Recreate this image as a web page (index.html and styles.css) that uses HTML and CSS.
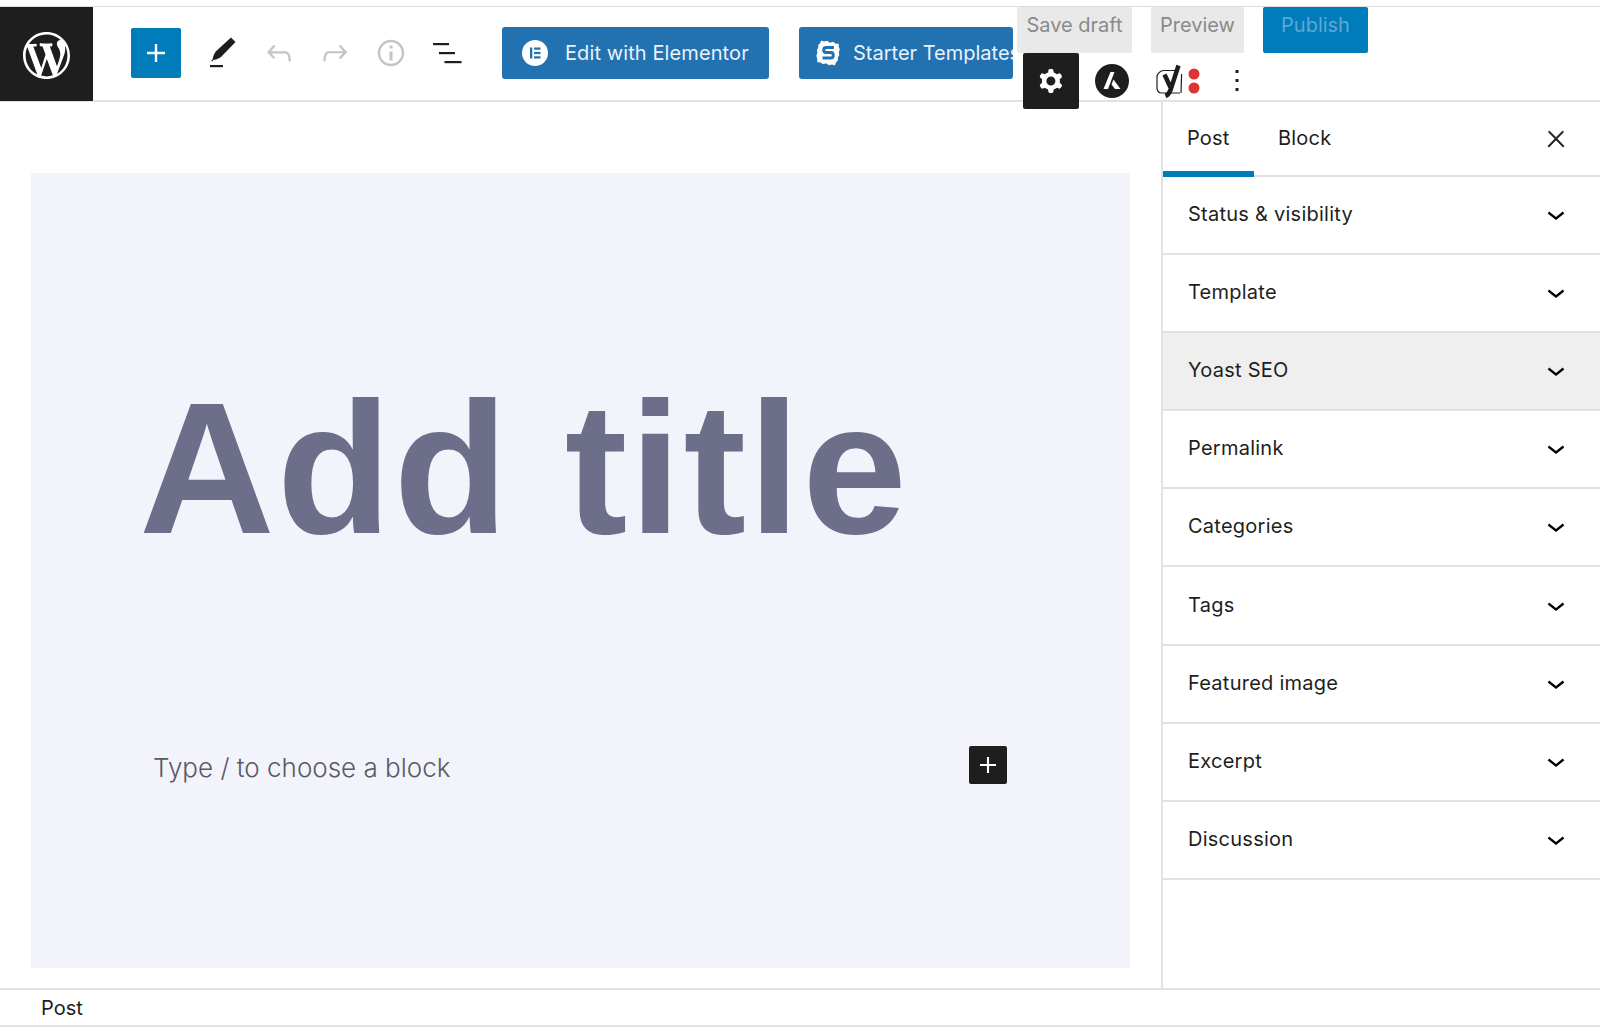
FILE: index.html
```html
<!DOCTYPE html>
<html lang="en">
<head>
<meta charset="utf-8">
<title>Add title</title>
<link rel="stylesheet" href="styles.css">
</head>
<body>
<div class="top-strip"></div>
<header class="header">
  <a class="logo"><svg viewBox="0 0 20 20" width="47" height="47"><path fill="#fff" d="M20 10c0-5.51-4.49-10-10-10C4.48 0 0 4.49 0 10c0 5.52 4.48 10 10 10 5.51 0 10-4.48 10-10zM7.78 15.37L4.37 6.22c.55-.02 1.17-.08 1.17-.08.5-.06.44-1.13-.06-1.11 0 0-1.45.11-2.37.11-.18 0-.37 0-.58-.01C4.12 2.69 6.87 1.11 10 1.11c2.33 0 4.45.87 6.05 2.34-.68-.11-1.65.39-1.65 1.58 0 .74.45 1.36.9 2.1.35.61.55 1.36.55 2.46 0 1.49-1.4 5-1.4 5l-3.03-8.37c.54-.02.82-.17.82-.17.5-.05.44-1.25-.06-1.22 0 0-1.44.12-2.38.12-.87 0-2.33-.12-2.33-.12-.5-.03-.56 1.2-.06 1.22l.92.08 1.26 3.41zM17.41 10c.24-.64.74-1.87.43-4.25.7 1.29 1.05 2.71 1.05 4.25 0 3.29-1.73 6.24-4.4 7.78.97-2.59 1.94-5.2 2.92-7.78zM6.1 18.09C3.12 16.65 1.11 13.53 1.11 10c0-1.3.23-2.48.72-3.59C3.25 10.3 4.67 14.2 6.1 18.09zm4.03-6.63l2.58 6.98c-.86.29-1.76.45-2.71.45-.79 0-1.57-.11-2.29-.33.81-2.38 1.62-4.74 2.42-7.1z"/></svg></a>
  <div class="tools">
    <button class="add"><svg viewBox="0 0 24 24" width="36" height="36"><path fill="#fff" d="M18 11.2h-5.2V6h-1.6v5.2H6v1.6h5.2V18h1.6v-5.2H18z"/></svg></button>
    <span class="tool"><svg viewBox="0 0 30 34" width="30" height="34"><path fill="#1e1e1e" d="M23 1.500l4.500 4.500-14 14.500c-2 1.800-5 3-8 3.500l-1.500 1.500-.8-.8 1.500-1.500c.4-3 1.500-6 3.300-8z"/><rect x="2" y="29" width="13" height="2.200" fill="#1e1e1e"/></svg></span>
    <span class="tool"><svg viewBox="0 0 24 24" width="36" height="36"><path fill="#c4c4c4" d="M18.300 11.700c-.6-.6-1.400-.9-2.300-.9H6.700l2.900-3.300-1.100-1-4.500 5L8.500 16l1-1-2.700-2.700H16c.5 0 .9.2 1.300.5 1 1 1 3.400 1 4.500v.3h1.500v-.2c0-1.500 0-4.300-1.500-5.700z"/></svg></span>
    <span class="tool"><svg viewBox="0 0 24 24" width="36" height="36"><path fill="#c4c4c4" d="M15.600 6.500l-1.100 1 2.900 3.300H8c-.9 0-1.700.3-2.300.9-1.400 1.500-1.400 4.200-1.400 5.600v.2h1.500v-.3c0-1.100 0-3.500 1-4.500.3-.3.7-.5 1.300-.5h9.200L14.500 15l1.100 1.100 4.600-4.600-4.600-5z"/></svg></span>
    <span class="tool"><svg viewBox="0 0 24 24" width="36" height="36"><path fill="#c4c4c4" d="M12 3.200c-4.800 0-8.800 3.900-8.800 8.800 0 4.800 3.900 8.800 8.800 8.800 4.800 0 8.800-3.900 8.800-8.800 0-4.800-4-8.800-8.800-8.800zm0 16c-4 0-7.200-3.300-7.200-7.200C4.800 8 8 4.800 12 4.800s7.200 3.300 7.200 7.200c0 4-3.200 7.200-7.200 7.200zM11 17h2v-6h-2v6zm0-8h2V7h-2v2z"/></svg></span>
    <span class="tool"><svg viewBox="0 0 30 24" width="30" height="24"><g fill="#1e1e1e"><rect x="1" y="2" width="16" height="2.200"/><rect x="7" y="11" width="16" height="2.200"/><rect x="12.500" y="20" width="17" height="2.200"/></g></svg></span>
  </div>
  <a class="plugin elementor"><svg class="el-icon" viewBox="0 0 26 26" width="26" height="26"><circle cx="13" cy="13" r="13" fill="#fff"/><g fill="#2271b1"><rect x="8" y="7.500" width="2.300" height="11"/><rect x="12" y="7.500" width="6.500" height="2.200"/><rect x="12" y="11.900" width="6.500" height="2.200"/><rect x="12" y="16.300" width="6.500" height="2.200"/></g></svg><span>Edit with Elementor</span></a>
  <a class="plugin starter"><svg class="st-icon" viewBox="0 0 28 30" width="28" height="30"><path fill="#fff" transform="rotate(10 14 15)" d="M5 4l3 .5L11 3l3 1.500L17 3l3 1.500 3-.5.5 3 1.500 2.500-.5 3 1 2.500-1 2.500.5 3-1.500 2.500-.5 3-3-.5-3 1.500-3-1.500-3 1.500-3-1.500-3 .5-.5-3L3 19.500l.5-3L2.500 14l1-2.500-.5-3L4.500 7z"/><path fill="none" stroke="#2271b1" stroke-width="3" d="M20 9.500h-8c-3 0-3 5 0 5h5c3 0 3 5.500 0 5.500H8.500"/></svg><span>Starter Templates</span></a>
  <div class="publish-area">
    <div class="publish-row">
      <button class="pill draft">Save draft</button>
      <button class="pill preview">Preview</button>
      <button class="pill publish">Publish</button>
    </div>
    <div class="icon-row">
      <button class="settings"><svg viewBox="0 0 24 24" width="36" height="36"><path fill="#fff" fill-rule="evenodd" d="M10.289 4.836A1 1 0 0111.275 4h1.306a1 1 0 01.987.836l.244 1.466c.787.26 1.503.679 2.108 1.218l1.393-.522a1 1 0 011.216.437l.653 1.130a1 1 0 01-.23 1.273l-1.148.944a6.025 6.025 0 010 2.435l1.149.946a1 1 0 01.23 1.272l-.653 1.130a1 1 0 01-1.216.437l-1.394-.522c-.605.54-1.320.958-2.108 1.218l-.244 1.466a1 1 0 01-.987.836h-1.306a1 1 0 01-.986-.836l-.244-1.466a5.995 5.995 0 01-2.108-1.218l-1.394.522a1 1 0 01-1.217-.436l-.653-1.131a1 1 0 01.23-1.272l1.149-.946a6.026 6.026 0 010-2.435l-1.148-.944a1 1 0 01-.23-1.272l.653-1.131a1 1 0 011.217-.437l1.393.522a5.994 5.994 0 012.108-1.218l.244-1.466zM14.929 12a3 3 0 11-6 0 3 3 0 016 0z"/></svg></button>
      <svg class="astra" viewBox="0 0 34 34" width="34" height="34"><circle cx="17" cy="17" r="17" fill="#1e1e1e"/><path fill="#fff" d="M15.500 8h4L13 25H8.500z"/><path fill="#fff" d="M18.500 15.500L25.500 25h-5.500l-3.500-4.500z"/></svg>
      <svg class="yoast" viewBox="0 0 46 34" width="46" height="34"><path fill="none" stroke="#1e1e1e" stroke-width="1.200" d="M8 6.500h14M24 29H6c-3 0-5-2-5-5V13c0-3 3-6.500 7-6.500M25 29l.6-19"/><path fill="none" stroke="#1e1e1e" stroke-width="4.500" d="M8.500 10.500l6.500 14M22.500 1.500L14.500 26c-1 3-2.500 5-5 6"/><circle cx="38" cy="10" r="5.500" fill="#dd3333"/><circle cx="38" cy="24" r="5.500" fill="#dd3333"/></svg>
      <svg class="more" viewBox="0 0 4 22" width="4" height="22"><g fill="#1e1e1e"><rect x="0.500" y="0" width="3" height="3"/><rect x="0.500" y="9" width="3" height="3"/><rect x="0.500" y="18" width="3" height="3"/></g></svg>
    </div>
  </div>
</header>
<div class="main">
  <main class="editor">
    <section class="canvas">
      <h1 class="title">Add title</h1>
      <div class="appender">
        <p class="placeholder">Type / to choose a block</p>
        <button class="block-add"><svg viewBox="0 0 24 24" width="32" height="32"><path fill="#fff" d="M18 11.200h-5.200V6h-1.600v5.200H6v1.600h5.200V18h1.600v-5.200H18z"/></svg></button>
      </div>
    </section>
  </main>
  <aside class="sidebar">
    <div class="tabs">
      <span class="tab active">Post</span>
      <span class="tab">Block</span>
      <svg class="close" viewBox="0 0 24 24" width="26" height="26"><path fill="#1e1e1e" stroke="#1e1e1e" stroke-width=".5" d="M13 11.800l6.100-6.300-1-1-6.100 6.200-6.100-6.200-1 1 6.100 6.300-6.500 6.700 1 1 6.500-6.600 6.500 6.600 1-1z"/></svg>
    </div>
    <div class="panel"><span>Status &amp; visibility</span><svg viewBox="0 0 24 24" width="36" height="36"><path d="M17.500 11.600L12 16l-5.500-4.400.9-1.200L12 14l4.500-3.600 1 1.200z"/></svg></div>
    <div class="panel"><span>Template</span><svg viewBox="0 0 24 24" width="36" height="36"><path d="M17.500 11.600L12 16l-5.500-4.400.9-1.200L12 14l4.500-3.600 1 1.200z"/></svg></div>
    <div class="panel shaded"><span>Yoast SEO</span><svg viewBox="0 0 24 24" width="36" height="36"><path d="M17.500 11.600L12 16l-5.500-4.400.9-1.200L12 14l4.500-3.600 1 1.200z"/></svg></div>
    <div class="panel"><span>Permalink</span><svg viewBox="0 0 24 24" width="36" height="36"><path d="M17.500 11.600L12 16l-5.500-4.400.9-1.200L12 14l4.500-3.600 1 1.200z"/></svg></div>
    <div class="panel"><span>Categories</span><svg viewBox="0 0 24 24" width="36" height="36"><path d="M17.500 11.600L12 16l-5.500-4.400.9-1.200L12 14l4.500-3.600 1 1.200z"/></svg></div>
    <div class="panel"><span>Tags</span><svg viewBox="0 0 24 24" width="36" height="36"><path d="M17.500 11.600L12 16l-5.500-4.400.9-1.200L12 14l4.500-3.600 1 1.200z"/></svg></div>
    <div class="panel"><span>Featured image</span><svg viewBox="0 0 24 24" width="36" height="36"><path d="M17.500 11.600L12 16l-5.500-4.400.9-1.200L12 14l4.500-3.600 1 1.200z"/></svg></div>
    <div class="panel"><span>Excerpt</span><svg viewBox="0 0 24 24" width="36" height="36"><path d="M17.500 11.600L12 16l-5.500-4.400.9-1.200L12 14l4.500-3.600 1 1.200z"/></svg></div>
    <div class="panel"><span>Discussion</span><svg viewBox="0 0 24 24" width="36" height="36"><path d="M17.500 11.600L12 16l-5.500-4.400.9-1.200L12 14l4.500-3.600 1 1.200z"/></svg></div>
  </aside>
</div>
<footer class="status">Post</footer>
</body>
</html>
```
FILE: styles.css
```css
* { box-sizing: border-box; }
html, body { margin: 0; height: 100%; }
svg { flex: none; display: block; }
body {
  background: #fff;
  color: #1e1e1e;
  font-family: Inter, "Liberation Sans", sans-serif;
  display: flex;
  flex-direction: column;
  height: 1027px;
  overflow: hidden;
}
button { font-family: inherit; border: 0; padding: 0; cursor: pointer; }
.top-strip { height: 7px; border-bottom: 1px solid #dcdcdc; flex: none; }
.header {
  height: 95px;
  flex: none;
  display: flex;
  align-items: flex-start;
  border-bottom: 2px solid #e2e2e2;
}
.logo {
  width: 93px;
  height: 94px;
  padding-top: 2px;
  background: #1e1e1e;
  display: flex;
  align-items: center;
  justify-content: center;
  flex: none;
}
.tools { display: flex; align-items: center; height: 92px; margin-left: 38px; width: 360px; flex: none; }
.add {
  width: 50px;
  height: 50px;
  background: #007cba;
  border-radius: 2px;
  display: flex;
  align-items: center;
  justify-content: center;
  margin-right: 14px;
  flex: none;
}
.tool { width: 56px; display: flex; justify-content: center; flex: none; }
.plugin {
  height: 52px;
  margin-top: 20px;
  background: #2271b1;
  color: #e9f2f9;
  border-radius: 3px;
  display: flex;
  align-items: center;
  font-size: 20px;
  white-space: nowrap;
  overflow: hidden;
  flex: none;
}
.elementor { width: 267px; margin-left: 11px; padding-left: 20px; gap: 17px; letter-spacing: .1px; }
.starter { width: 214px; margin-left: 30px; padding-left: 15px; gap: 11px; }
.publish-area { display: flex; flex-direction: column; margin-left: 4px; flex: none; }
.publish-row { display: flex; align-items: flex-start; height: 46px; }
.pill {
  height: 46px;
  padding-bottom: 10px;
  border-radius: 2px;
  font-size: 20px;
  background: #e9e9e9;
  color: #8a8a8a;
}
.draft { width: 115px; }
.preview { width: 93px; margin-left: 19px; }
.publish { width: 105px; margin-left: 19px; background: #007cba; color: #5fa8d3; }
.icon-row { display: flex; align-items: center; height: 56px; padding-left: 6px; }
.settings {
  width: 56px;
  height: 56px;
  background: #1e1e1e;
  border-radius: 2px;
  display: flex;
  align-items: center;
  justify-content: center;
  position: relative;
  flex: none;
}
.astra { margin-left: 16px; }
.yoast { margin-left: 27px; }
.more { margin-left: 33px; }
.main { flex: 1; display: flex; min-height: 0; }
.editor { flex: 1; min-width: 0; padding: 71px 31px 20px 31px; }
.canvas {
  height: 795px;
  background: #f3f4fb;
  padding: 0 123px 0 112px;
  display: flex;
  flex-direction: column;
}
.title {
  margin: 195px 0 0 -4px;
  font-family: "Liberation Sans", Arial, sans-serif;
  font-size: 188px;
  line-height: 200px;
  font-weight: 700;
  letter-spacing: 2px;
  color: #6d6e8a;
  white-space: nowrap;
}
.appender {
  margin-top: 178px;
  padding-left: 10px;
  display: flex;
  align-items: center;
  justify-content: space-between;
}
.placeholder { margin: 0; padding-top: 4px; font-size: 26px; font-weight: 300; color: #5a5a66; }
.block-add {
  width: 38px;
  height: 38px;
  background: #1e1e1e;
  border-radius: 2px;
  display: flex;
  align-items: center;
  justify-content: center;
  flex: none;
}
.sidebar { width: 439px; flex: none; border-left: 2px solid #e2e2e2; }
.tabs {
  height: 75px;
  display: flex;
  border-bottom: 2px solid #e2e2e2;
  align-items: stretch;
  position: relative;
  font-size: 20px;
  letter-spacing: .2px;
}
.tab { width: 91px; padding: 24px 0 0 24px; }
.tab.active { border-bottom: 6px solid #007cba; margin-bottom: -2px; }
.close { position: absolute; right: 31px; top: 24px; }
.panel {
  height: 78.1px;
  display: flex;
  align-items: center;
  justify-content: space-between;
  padding: 0 26px 2px 25px;
  border-bottom: 2px solid #e2e2e2;
  font-size: 20px;
  letter-spacing: .25px;
}
.panel.shaded { background: #efefef; }
.status {
  height: 39px;
  flex: none;
  border-top: 2px solid #e2e2e2;
  border-bottom: 2px solid #e2e2e2;
  padding-left: 41px;
  font-size: 20px;
  line-height: 37px;
}
```
